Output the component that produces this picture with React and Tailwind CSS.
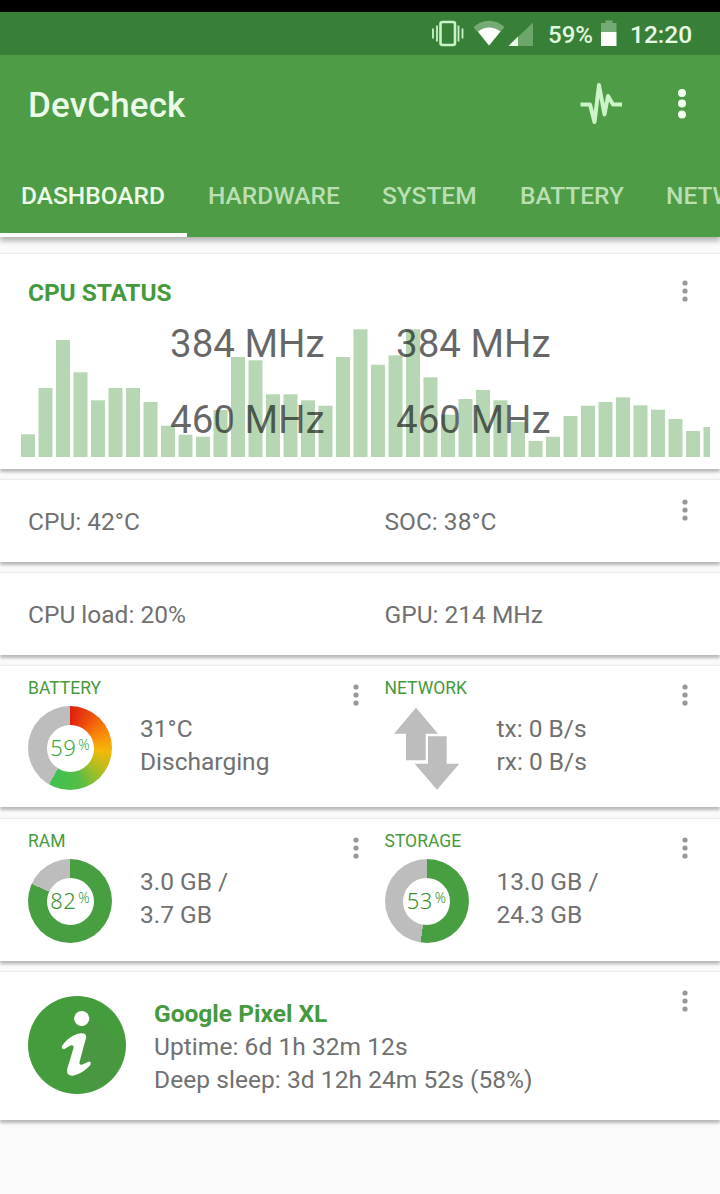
import React from 'react';

const bars = [
  22.7, 69, 117, 84.7, 56.7, 69, 69, 55, 31.3, 22.3, 20.3, 47, 100, 96.7, 62.7, 62.7, 56.7, 51.3, 100, 127.7,
  92.3, 101.7, 127.7, 79.7, 42.3, 58, 67, 56.7, 35, 16, 20.3, 41, 51.3, 55, 59.7, 51.7, 47.3, 38, 26, 30,
];

const cardShadow = 'bg-white shadow-[0_3px_3px_rgba(0,0,0,0.27),0_-1px_1px_rgba(0,0,0,0.06)]';

function Dots({ className = '' }) {
  return (
    <svg className={`h-6 w-2 shrink-0 fill-[#989898] ${className}`} viewBox="0 0 8 24">
      <circle cx="4" cy="4" r="2.6" />
      <circle cx="4" cy="12" r="2.6" />
      <circle cx="4" cy="20" r="2.6" />
    </svg>
  );
}

function Donut({ value, ring, color }) {
  return (
    <div className={`flex size-[84px] shrink-0 items-center justify-center rounded-full ${ring}`}>
      <div
        className={`flex size-[47px] items-start justify-center rounded-full bg-white pt-[10px] font-['Noto_Sans','Open_Sans',sans-serif] font-light ${color}`}
      >
        <span className="text-[22px] leading-[25px] tracking-[0.4px]">{value}</span>
        <span className="ml-[2px] text-[14px] leading-[20px]">%</span>
      </div>
    </div>
  );
}

function Panel({ label, lines, children }) {
  return (
    <div className="flex flex-1 flex-col pt-3">
      <div className="h-5 text-[17.5px] leading-5 text-[#459a3d]">{label}</div>
      <div className="mt-2 flex gap-7">
        {children}
        <div className="mt-[6px] leading-[33px] whitespace-nowrap">
          {lines.map((l) => (
            <div key={l}>{l}</div>
          ))}
        </div>
      </div>
    </div>
  );
}

function DoubleCard({ className, left, right }) {
  return (
    <section className={`flex pl-7 ${className} ${cardShadow}`}>
      <div className="flex w-[356.5px]">
        {left}
        <Dots className="mt-[17px] mr-[24.5px]" />
      </div>
      <div className="flex flex-1">
        {right}
        <Dots className="mt-[17px] mr-[31px]" />
      </div>
    </section>
  );
}

function StatusBar() {
  return (
    <div className="flex h-[43px] items-center bg-[#388038] pl-[431px] text-[#e9fbe6]">
      <svg className="h-[30px] w-[168px] shrink-0" viewBox="431 19 168 30">
        <g fill="none" stroke="#c9f3c6">
          <rect x="440.5" y="22" width="14.5" height="23" rx="2" strokeWidth="2.6" />
          <path d="M437 25.5v16M458.5 25.5v16" strokeWidth="1.8" />
          <path d="M433 28.5v10M462.5 28.5v10" strokeWidth="1.8" />
        </g>
        <path d="M473.5 27Q489 14.500 504.500 27L489 45.500Z" fill="#76aa74" />
        <path d="M478 31.500Q489 23.500 500.500 31.500L489 45.500Z" fill="#fff" />
        <path d="M533 22.500V46H508.500Z" fill="#6da66b" />
        <path d="M518 36.500V46H508.500Z" fill="#eefded" />
        <text x="548" y="43.300" fontSize="24.5" fontWeight="500" fill="#dff7db" textLength="45" lengthAdjust="spacingAndGlyphs">
          59%
        </text>
      </svg>
      <svg className="h-[30px] w-[20px] shrink-0" viewBox="599 19 20 30">
        <path d="M601 23h4.500v-2.500h7V23H616.500v9H601Z" fill="#76aa74" />
        <path d="M601 32h15.500v14H601Z" fill="#fff" />
      </svg>
      <span className="ml-[11px] pt-[3px] text-[24.5px] leading-none font-medium">12:20</span>
    </div>
  );
}

export default function App() {
  return (
    <div className="flex h-[1194px] w-[720px] flex-col overflow-hidden bg-[#fafafa] font-[Roboto,sans-serif] text-[24.5px] text-[#707070]">
      <div className="h-3 shrink-0 bg-black" />
      <header className="flex h-[225px] shrink-0 flex-col bg-[#4e9c45] shadow-[0_4px_5px_rgba(0,0,0,0.28)]">
        <StatusBar />
        <div className="flex h-[100px] items-center pr-[32.5px] pl-7">
          <h1 className="flex-1 text-[35px] leading-none font-medium tracking-[0.15px] text-[#ecfbe8]">DevCheck</h1>
          <svg className="mr-[52.5px] h-11 w-11 shrink-0" viewBox="579 83 44 44">
            <path
              d="M580.500 104.500H590L594.500 122L599 85L604.500 114.500L608 96L613 104.500H622"
              fill="none"
              stroke="#cdf3c8"
              strokeWidth="4"
              strokeLinejoin="round"
            />
          </svg>
          <svg className="mb-[3px] h-[30px] w-3 shrink-0" viewBox="0 0 12 30" fill="#f4fff2">
            <circle cx="6" cy="4" r="4" />
            <circle cx="6" cy="14.5" r="4" />
            <circle cx="6" cy="25.500" r="4" />
          </svg>
        </div>
        <nav className="flex h-[82px] overflow-hidden pt-[24px] text-[24.500px] leading-[34px] font-medium text-[#b9dfb3]">
          <div className="flex w-[187px] shrink-0 flex-col justify-between border-b-4 border-white pl-[21px] text-[#ecfce8]">
            DASHBOARD
          </div>
          <div className="w-[174px] shrink-0 pl-[21px]">HARDWARE</div>
          <div className="w-[138px] shrink-0 pl-[21px]">SYSTEM</div>
          <div className="w-[146px] shrink-0 pl-[21px]">BATTERY</div>
          <div className="w-[160px] shrink-0 pl-[21px]">NETWORK</div>
        </nav>
      </header>

      <main className="flex flex-col pt-[17px]">
        <section className={`grid h-[215px] ${cardShadow}`}>
          <div className="col-start-1 row-start-1 flex items-end pb-3 pl-[20.7px]">
            <svg className="h-32 w-[690px]" viewBox="0 0 690 128">
              {bars.map((h, i) => (
                <rect key={i} x={i * 17.5} y={128 - h} width={i === 39 ? 6.5 : 14} height={h} fill="#b7d7b4" />
              ))}
            </svg>
          </div>
          <div className="relative col-start-1 row-start-1 flex flex-col">
            <div className="flex justify-between pt-[25px] pr-[31px] pl-7">
              <h2 className="h-[29px] leading-[27px] font-bold tracking-[-0.1px] text-[#459a3d]">CPU STATUS</h2>
              <Dots />
            </div>
            <div className="mt-[-2px] grid grid-cols-[226px_auto] pl-[170px] text-[38.5px] leading-[76px] text-black/60">
              <span>384 MHz</span>
              <span>384 MHz</span>
              <span>460 MHz</span>
              <span>460 MHz</span>
            </div>
          </div>
        </section>

        <section className={`mt-[11px] flex h-[82px] items-center pr-[31px] pl-7 ${cardShadow}`}>
          <div className="w-[356.5px] pt-[2px]">CPU: 42°C</div>
          <div className="flex-1 pt-[2px]">SOC: 38°C</div>
          <Dots className="mt-[18px] self-start" />
        </section>

        <section className={`mt-[11px] flex h-[82px] items-center pt-[2px] pl-7 ${cardShadow}`}>
          <div className="w-[356.5px]">CPU load: 20%</div>
          <div>GPU: 214 MHz</div>
        </section>

        <DoubleCard
          className="mt-[11px] h-[141px]"
          left={
            <Panel label="BATTERY" lines={['31°C', 'Discharging']}>
              <Donut
                value="59"
                color="text-[#38ab3e]"
                ring="bg-[conic-gradient(#e01d10_0deg,#ec4a0c_30deg,#f98006_60deg,#f5b80a_95deg,#a9bd25_130deg,#55bd48_165deg,#3fc150_210deg,#bdbdbd_210deg)]"
              />
            </Panel>
          }
          right={
            <Panel label="NETWORK" lines={['tx: 0 B/s', 'rx: 0 B/s']}>
              <svg className="size-[84px] shrink-0" viewBox="385 706 84 84" fill="#bdbdbd">
                <path d="M416 707.700L438 733.700H425.700V760.300H406V733.700H394Z" />
                <path d="M428 736.300H446.700V763.700H459.300L437 789.700L414.700 763.700H428Z" />
              </svg>
            </Panel>
          }
        />

        <DoubleCard
          className="mt-3 h-[142px]"
          left={
            <Panel label="RAM" lines={['3.0 GB /', '3.7 GB']}>
              <Donut value="82" color="text-[#35912d]" ring="bg-[conic-gradient(#489f41_294deg,#bdbdbd_294deg)]" />
            </Panel>
          }
          right={
            <Panel label="STORAGE" lines={['13.0 GB /', '24.3 GB']}>
              <Donut value="53" color="text-[#35912d]" ring="bg-[conic-gradient(#489f41_189deg,#bdbdbd_189deg)]" />
            </Panel>
          }
        />

        <section className={`mt-[11px] flex h-[148px] pr-[31px] pl-7 ${cardShadow}`}>
          <svg className="mt-6 size-[98px] shrink-0" viewBox="0 0 98 98">
            <circle cx="49" cy="49" r="49" fill="#449c3d" />
            <path d="M60 19L91 48Q96 84 62 96L42 78L58 40Z" fill="#4c9545" opacity=".6" />
            <circle cx="53.700" cy="22.500" r="7.600" fill="#fff" />
            <path
              d="M33.700 50.500C38 44 45 38 53 37.300Q59 37 58 42L51.500 66Q51 69.500 54.500 68.500L61 65.500Q64 66 62 69.500Q54 78 45 79.700Q38 80 39.200 73L45.500 52Q46 48.500 42.500 49.500L36.500 53Q33.500 53.500 33.700 50.500Z"
              fill="#fff"
            />
          </svg>
          <div className="mt-[25px] ml-7 flex-1 leading-[33px] tracking-[0.06px]">
            <div className="font-bold tracking-normal text-[#459a3d]">Google Pixel XL</div>
            <div>Uptime: 6d 1h 32m 12s</div>
            <div>Deep sleep: 3d 12h 24m 52s (58%)</div>
          </div>
          <Dots className="mt-[17px]" />
        </section>
      </main>
    </div>
  );
}
